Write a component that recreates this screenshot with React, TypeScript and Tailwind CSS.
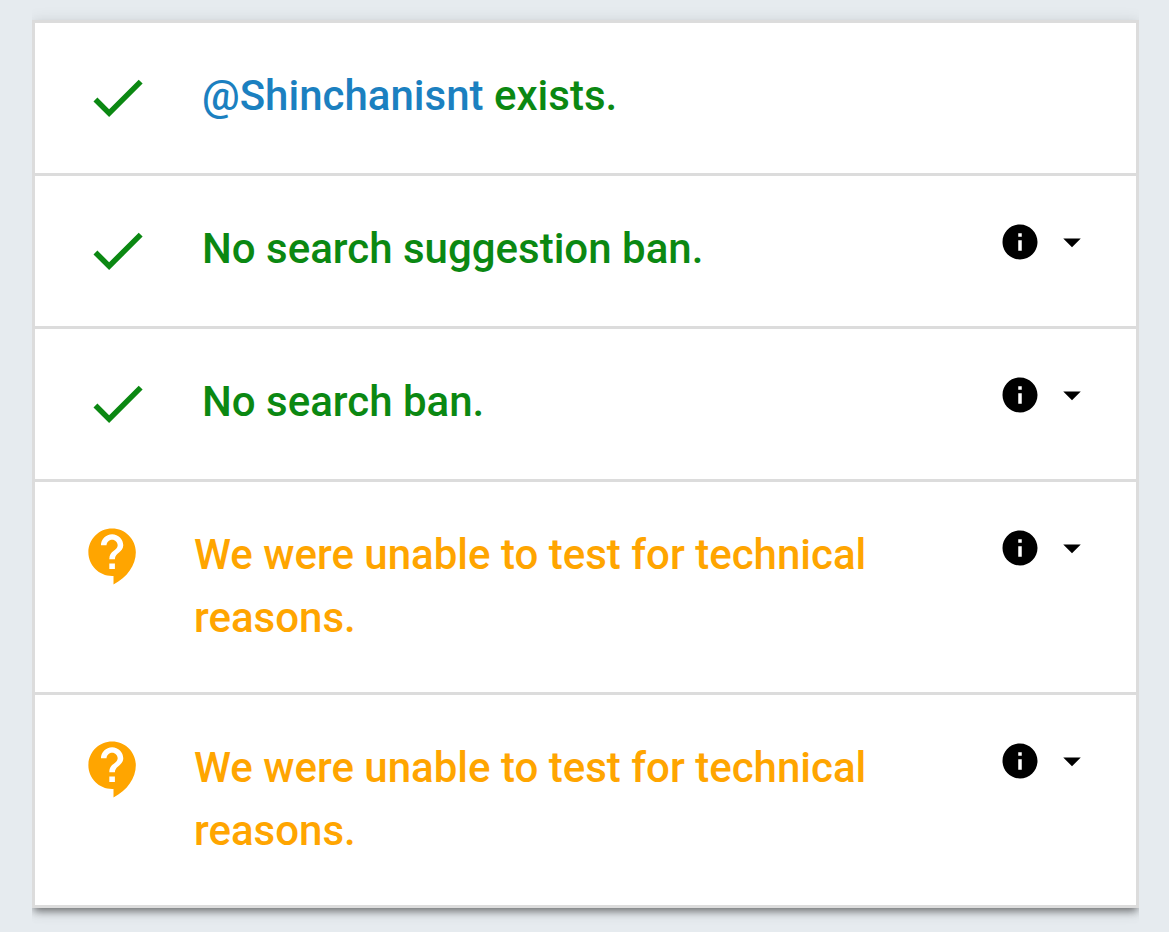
import { FC } from "react";
import { clsx } from "clsx";
import {
  MdArrowDropDown,
  MdContactSupport,
  MdDone,
  MdInfo,
} from "react-icons/md";

type Status = "ok" | "unknown";

interface Result {
  id: string;
  status: Status;
  user?: string;
  message: string;
  hasDetails: boolean;
}

const results: Result[] = [
  {
    id: "exists",
    status: "ok",
    user: "@Shinchanisnt",
    message: "exists.",
    hasDetails: false,
  },
  {
    id: "suggestion",
    status: "ok",
    message: "No search suggestion ban.",
    hasDetails: true,
  },
  {
    id: "search",
    status: "ok",
    message: "No search ban.",
    hasDetails: true,
  },
  {
    id: "ghost",
    status: "unknown",
    message: "We were unable to test for technical reasons.",
    hasDetails: true,
  },
  {
    id: "reply",
    status: "unknown",
    message: "We were unable to test for technical reasons.",
    hasDetails: true,
  },
];

const DetailsButton: FC = () => (
  <button
    type="button"
    aria-label="Show details"
    className="mt-1 flex shrink-0 gap-[10px] text-black"
  >
    <MdInfo className="size-[42px]" />
    <MdArrowDropDown className="size-[42px]" />
  </button>
);

const ResultRow: FC<{ result: Result }> = ({ result }) => {
  const { status, user, message, hasDetails } = result;
  const ok = status === "ok";
  const Icon = ok ? MdDone : MdContactSupport;

  return (
    <li
      className={clsx(
        "flex items-start pt-[41px] pr-[43px]",
        ok
          ? "gap-[51px] pb-[46px] pl-[49px] text-[#0b8812]"
          : "gap-[47px] pb-[43px] pl-[45px] text-[#ffa500]"
      )}
    >
      {/* the icon is a little taller than a line of text */}
      <Icon className="-mb-1 size-[67px] shrink-0" />
      <p className="flex-1 text-[42px] leading-[63px] font-medium">
        {user && (
          <>
            <a href="#profile" className="text-[#1b80c0]">
              {user}
            </a>{" "}
          </>
        )}
        {message}
      </p>
      {hasDetails && <DetailsButton />}
    </li>
  );
};

export default function App() {
  return (
    <main className="min-h-screen bg-[#e6ebef] pt-5 pr-[30px] pb-6 pl-8 font-['Roboto',sans-serif]">
      <ul className="divide-y-[3px] divide-[#dcdcdc] border-[3px] border-[#dcdcdc] bg-white shadow-[0_5px_8px_-2px_rgba(0,0,0,0.5),0_2px_16px_0_rgba(0,0,0,0.1)] [clip-path:inset(-32px_0)]">
        {results.map((result) => (
          <ResultRow key={result.id} result={result} />
        ))}
      </ul>
    </main>
  );
}
